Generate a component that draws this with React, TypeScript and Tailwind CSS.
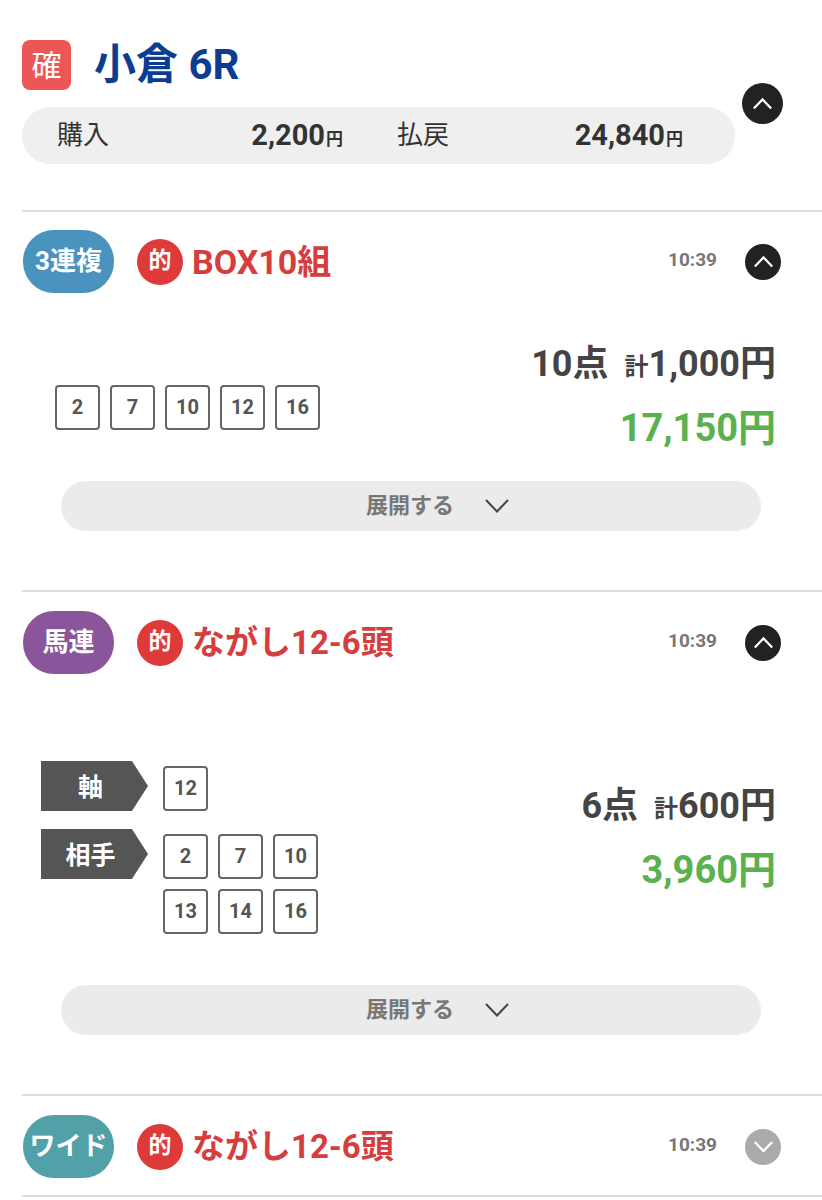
import React from "react";

function Chevron({ down = false, size = 24, stroke = "#fff", width = 2.8 }: { down?: boolean; size?: number; stroke?: string; width?: number }) {
  return (
    <svg width={size} height={size / 2 + 2} viewBox="0 0 24 14" fill="none">
      <polyline
        points={down ? "1,1 12,12.5 23,1" : "1,13 12,1.5 23,13"}
        stroke={stroke}
        strokeWidth={width}
      />
    </svg>
  );
}

function NumBox({ n }: { n: number }) {
  return (
    <div className="w-[45px] h-[45px] shrink-0 flex items-center justify-center border-2 border-[#666] rounded-[4px] bg-white text-[20px] font-bold text-[#555] leading-none pb-[1px]">
      {n}
    </div>
  );
}

function ArrowLabel({ text }: { text: string }) {
  return (
    <div className="w-[107px] h-[50px] shrink-0 bg-[#555] text-white text-[25px] font-bold flex items-center justify-center pr-[8px] pt-[3px] [clip-path:polygon(0_0,85%_0,100%_50%,85%_100%,0_100%)]">
      {text}
    </div>
  );
}

function Row({ type, color, title, titleSize, open = true }: { type: string; color: string; title: string; titleSize: string; open?: boolean }) {
  return (
    <div className="flex items-center h-[63px] pl-[1px] pr-[41px]">
      <div className={`w-[91px] h-[63px] rounded-[31px] flex items-center justify-center text-white text-[26px] font-bold ${color}`}>
        {type}
      </div>
      <div className="ml-[23px] w-[46px] h-[46px] rounded-full bg-[#df3a3a] flex items-center justify-center text-white text-[23px] font-bold">
        的
      </div>
      <div className={`ml-[9px] font-bold text-[#d63d3d] leading-none ${titleSize}`}>{title}</div>
      <div className="ml-auto mb-[3px] text-[19px] font-bold text-[#777]">10:39</div>
      <div className={`ml-[28px] w-[36px] h-[36px] rounded-full flex items-center justify-center ${open ? "bg-[#222]" : "bg-[#aaa]"}`}>
        <Chevron down={!open} size={19} />
      </div>
    </div>
  );
}

function Amounts({ points, total, payout }: { points: string; total: string; payout: string }) {
  return (
    <div className="flex flex-col items-end gap-[20px] pr-[46px]">
      <div className="h-[44px] flex items-center text-[36px] font-bold text-[#444] leading-none">
        <span>{points}</span>
        <span className="ml-[16px] text-[24px] mt-[6px]">計</span>
        <span>{total}</span>
      </div>
      <div className="h-[44px] flex items-center text-[38px] font-bold text-[#5bb050] leading-none">{payout}</div>
    </div>
  );
}

function Expand() {
  return (
    <div className="ml-[39px] w-[700px] h-[50px] rounded-[25px] bg-[#ebebeb] flex items-center justify-center gap-[31px] pl-[53px]">
      <span className="text-[22px] font-bold text-[#777] mb-[2px]">展開する</span>
      <Chevron down size={24} stroke="#444" width={2} />
    </div>
  );
}

export default function App() {
  return (
    <div className="w-[822px] h-[1200px] overflow-hidden bg-white font-['Roboto','Noto_Sans_CJK_JP',sans-serif]">
      <div className="pt-[40px] pl-[22px] flex">
        <div className="w-[713px]">
          <div className="flex items-center h-[50px]">
            <div className="w-[49px] h-[50px] rounded-[8px] bg-[#ec5656] text-white text-[30px] flex items-center justify-center">確</div>
            <div className="ml-[23px] text-[42px] font-bold text-[#0b3d91] leading-none">小倉 6R</div>
          </div>
          <div className="mt-[17px] h-[57px] rounded-[28px] bg-[#efefef] flex items-center pl-[35px] gap-[54px] text-[#333]">
            {[
              ["購入", "2,200"],
              ["払戻", "24,840"],
            ].map(([label, value]) => (
              <div key={label} className="w-[286px] flex items-center justify-between">
                <span className="text-[26px]">{label}</span>
                <span className="font-bold text-[29px] leading-none">
                  {value}
                  <span className="text-[17px] ml-[1px]">円</span>
                </span>
              </div>
            ))}
          </div>
        </div>
        <div className="ml-[7px] mt-[43px] w-[41px] h-[41px] rounded-full bg-[#222] flex items-center justify-center">
          <Chevron size={19} />
        </div>
      </div>

      <section className="mt-[46px] ml-[22px] border-t-2 border-[#ddd] pt-[18px]">
        <Row type="3連複" color="bg-[#4a93bf]" title="BOX10組" titleSize="text-[34px]" />
        <div className="flex justify-between h-[188px]">
          <div className="ml-[33px] mt-[92px] flex gap-[10px] self-start">
            {[2, 7, 10, 12, 16].map((n) => (
              <NumBox key={n} n={n} />
            ))}
          </div>
          <div className="mt-[49px]">
            <Amounts points="10点" total="1,000円" payout="17,150円" />
          </div>
        </div>
        <Expand />
      </section>

      <section className="mt-[59px] ml-[22px] border-t-2 border-[#ddd] pt-[19px]">
        <Row type="馬連" color="bg-[#8a559b]" title="ながし12-6頭" titleSize="text-[33px]" />
        <div className="flex justify-between h-[311px]">
          <div className="ml-[19px] mt-[87px] flex flex-col gap-[18px] self-start">
            <div className="flex gap-[15px]">
              <ArrowLabel text="軸" />
              <div className="mt-[5px]">
                <NumBox n={12} />
              </div>
            </div>
            <div className="flex gap-[15px]">
              <ArrowLabel text="相手" />
              <div className="mt-[5px] grid grid-cols-3 gap-[10px]">
                {[2, 7, 10, 13, 14, 16].map((n) => (
                  <NumBox key={n} n={n} />
                ))}
              </div>
            </div>
          </div>
          <div className="mt-[110px]">
            <Amounts points="6点" total="600円" payout="3,960円" />
          </div>
        </div>
        <Expand />
      </section>

      <section className="mt-[59px] ml-[22px] border-y-2 border-[#ddd] pt-[19px] pb-[17px]">
        <Row type="ワイド" color="bg-[#52a0a8]" title="ながし12-6頭" titleSize="text-[33px]" open={false} />
      </section>
    </div>
  );
}
